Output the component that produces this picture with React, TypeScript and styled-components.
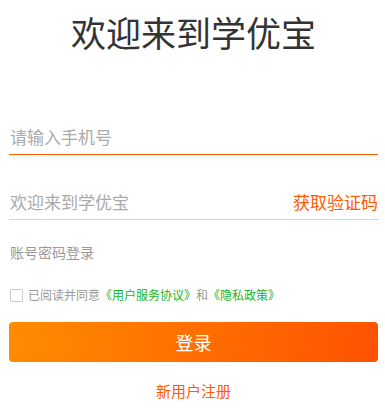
import React from 'react';
import styled, {createGlobalStyle} from 'styled-components';

const GlobalStyle = createGlobalStyle`
  html, body {
    margin: 0;
    padding: 0;
    background: #fff;
  }
  body {
    font-family: "Noto Sans CJK SC", "Noto Sans", sans-serif;
  }
`;

const ORANGE = '#ff5a00';

const LoginPage = () => {
  return (
    <Styled.Page>
      <Styled.Title>欢迎来到学优宝</Styled.Title>

      <Styled.Field $active>
        <Styled.Input placeholder="请输入手机号" />
      </Styled.Field>

      <Styled.Field $gap={28}>
        <Styled.Input placeholder="欢迎来到学优宝" />
        <Styled.CodeLink>获取验证码</Styled.CodeLink>
      </Styled.Field>

      <Styled.SwitchLink>账号密码登录</Styled.SwitchLink>

      <Styled.Agreement>
        <Styled.Check />
        <span>已阅读并同意</span>
        <Styled.Doc>《用户服务协议》</Styled.Doc>
        <span>和</span>
        <Styled.Doc>《隐私政策》</Styled.Doc>
      </Styled.Agreement>

      <Styled.LoginButton>登录</Styled.LoginButton>

      <Styled.Register>新用户注册</Styled.Register>
    </Styled.Page>
  );
};

export default function App() {
  return (
    <>
      <GlobalStyle />
      <LoginPage />
    </>
  );
}

const Styled = {
  Page: styled.div`
    display: flex;
    flex-direction: column;
    padding: 0 7px 0 9px;
    width: 385px;
    box-sizing: border-box;
  `,
  Title: styled.h1`
    margin: 11px 0 0;
    font-size: 35px;
    font-weight: 400;
    line-height: 41px;
    color: #333;
    text-align: center;
  `,
  Field: styled.div<{$active?: boolean; $gap?: number}>`
    display: flex;
    align-items: center;
    height: 36px;
    margin-top: ${p => (p.$gap ?? 66)}px;
    border-bottom: 1px solid ${p => (p.$active ? ORANGE : '#d4d4d4')};
  `,
  Input: styled.input`
    flex: 1;
    min-width: 0;
    border: none;
    outline: none;
    padding: 0 0 0 1px;
    font-family: inherit;
    font-size: 17px;
    color: #333;
    background: transparent;
    &::placeholder {
      color: #aaa;
    }
  `,
  CodeLink: styled.span`
    font-size: 17px;
    color: ${ORANGE};
  `,
  SwitchLink: styled.div`
    margin-top: 22px;
    padding-left: 1px;
    font-size: 14px;
    line-height: 20px;
    color: #999;
  `,
  Agreement: styled.div`
    display: flex;
    align-items: center;
    margin-top: 23px;
    padding-left: 1px;
    font-size: 12px;
    line-height: 20px;
    color: #999;
  `,
  Check: styled.span`
    width: 11px;
    height: 11px;
    border: 1px solid #ccc;
    border-radius: 1px;
    margin-right: 5px;
  `,
  Doc: styled.span`
    color: #1bb41b;
  `,
  LoginButton: styled.button`
    margin-top: 17px;
    height: 40px;
    border: none;
    border-radius: 4px;
    background: linear-gradient(100deg, #ff8c00 0%, #ff5200 100%);
    color: #fff;
    font-family: inherit;
    font-size: 18px;
  `,
  Register: styled.div`
    margin-top: 19px;
    text-align: center;
    font-size: 15px;
    line-height: 20px;
    color: ${ORANGE};
  `,
};
